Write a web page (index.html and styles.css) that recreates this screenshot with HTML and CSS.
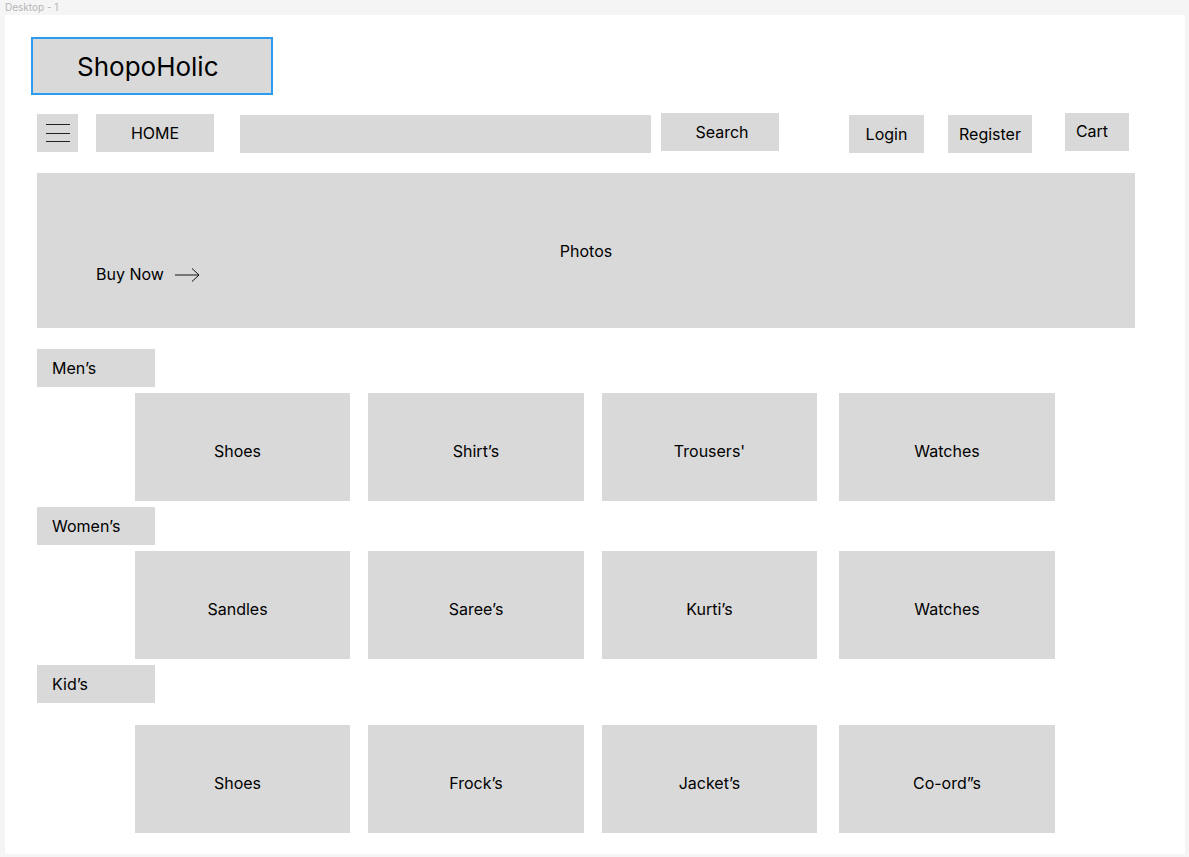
FILE: index.html
```html
<!DOCTYPE html>
<html lang="en">
<head>
<meta charset="utf-8">
<title>ShopoHolic</title>
<link rel="stylesheet" href="styles.css">
</head>
<body>
<div class="frame-label">Desktop - 1</div>
<div class="frame">
  <div class="logo">ShopoHolic</div>

  <nav class="nav">
    <button class="box menu" aria-label="Menu">
      <svg width="24" height="18" viewBox="0 0 24 18" fill="none" stroke="#222" stroke-width="1">
        <line x1="0" y1="0.5" x2="24" y2="0.5"/>
        <line x1="0" y1="9.5" x2="24" y2="9.5"/>
        <line x1="0" y1="17.5" x2="24" y2="17.5"/>
      </svg>
    </button>
    <div class="box home">HOME</div>
    <div class="box search-input"></div>
    <div class="box search-btn">Search</div>
    <div class="box login">Login</div>
    <div class="box register">Register</div>
    <div class="box cart">Cart</div>
  </nav>

  <section class="hero">
    <div class="hero-title">Photos</div>
    <div class="buy-now">Buy Now
      <svg width="25" height="14" viewBox="0 0 25 14" fill="none" stroke="#111" stroke-width="1">
        <line x1="0" y1="7" x2="24" y2="7"/>
        <polyline points="17,0.5 24,7 17,13.5"/>
      </svg>
    </div>
  </section>

  <section class="category men">
    <div class="box cat-label">Men’s</div>
    <div class="cards">
      <div class="box card first">Shoes</div>
      <div class="box card">Shirt’s</div>
      <div class="box card">Trousers'</div>
      <div class="box card last">Watches</div>
    </div>
  </section>

  <section class="category">
    <div class="box cat-label">Women’s</div>
    <div class="cards">
      <div class="box card first">Sandles</div>
      <div class="box card">Saree’s</div>
      <div class="box card">Kurti’s</div>
      <div class="box card last">Watches</div>
    </div>
  </section>

  <section class="category kids">
    <div class="box cat-label">Kid’s</div>
    <div class="cards">
      <div class="box card first">Shoes</div>
      <div class="box card">Frock’s</div>
      <div class="box card">Jacket’s</div>
      <div class="box card last">Co-ord”s</div>
    </div>
  </section>
</div>
</body>
</html>
```

FILE: styles.css
```css
* { box-sizing: border-box; }

html, body {
  margin: 0;
  padding: 0;
  background: #f5f5f5;
}

body {
  font-family: Inter, "Noto Sans", sans-serif;
  color: #000;
  width: 1189px;
  height: 857px;
  overflow: hidden;
}

.frame-label {
  height: 15px;
  padding-left: 5px;
  font-size: 10px;
  line-height: 14px;
  color: #b5b5b5;
}

.frame {
  margin-left: 5px;
  width: 1180px;
  height: 839px;
  background: #fff;
  padding-top: 22px;
  padding-left: 26px;
}

.box {
  background: #d9d9d9;
  border: 0;
  font-family: inherit;
  font-size: 16px;
  color: #000;
  display: flex;
  align-items: center;
  justify-content: center;
}

.logo {
  width: 242px;
  height: 58px;
  border: 2px solid #2b9cf2;
  background: #d9d9d9;
  font-size: 26px;
  display: flex;
  align-items: center;
  padding-left: 44px;
}

/* nav */
.nav {
  display: flex;
  align-items: flex-start;
  margin-top: 18px;
  margin-left: 6px;
  height: 40px;
}

.menu { width: 41px; height: 38px; margin-top: 1px; padding: 0; }
.home { width: 118px; height: 38px; margin-top: 1px; margin-left: 18px; }
.search-input { width: 411px; height: 38px; margin-top: 2px; margin-left: 26px; }
.search-btn { width: 118px; height: 38px; margin-left: 10px; padding-left: 4px; }
.login { width: 75px; height: 38px; margin-top: 2px; margin-left: 70px; padding-bottom: 1px; }
.register { width: 84px; height: 38px; margin-top: 2px; margin-left: 24px; padding-bottom: 1px; }
.cart { width: 64px; height: 38px; margin-left: 33px; padding-right: 10px; padding-bottom: 3px; }

/* hero */
.hero {
  margin-top: 20px;
  margin-left: 6px;
  width: 1098px;
  height: 155px;
  background: #d9d9d9;
  display: flex;
  flex-direction: column;
  padding-top: 68px;
  font-size: 16px;
}

.hero-title {
  align-self: center;
  line-height: 20px;
}

.buy-now {
  margin-top: 3px;
  margin-left: 59px;
  line-height: 20px;
  display: flex;
  align-items: center;
  gap: 11px;
}

.buy-now svg { margin-top: 2px; }

/* categories */
.category {
  margin-left: 6px;
  display: flex;
  flex-direction: column;
}

.category.men { margin-top: 21px; }

.cat-label {
  width: 118px;
  height: 38px;
  justify-content: flex-start;
  padding-left: 15px;
  margin-top: 6px;
}

.category.men .cat-label { margin-top: 0; }

.cards {
  display: flex;
  margin-top: 6px;
  margin-left: 98px;
  gap: 18px;
}

.kids .cards { margin-top: 22px; }

.card {
  width: 215px;
  height: 108px;
  padding-top: 8px;
}

.card.first { padding-right: 10px; }
.card.last { margin-left: 4px; width: 216px; }
.cards .card:nth-child(2) { width: 216px; }
```
